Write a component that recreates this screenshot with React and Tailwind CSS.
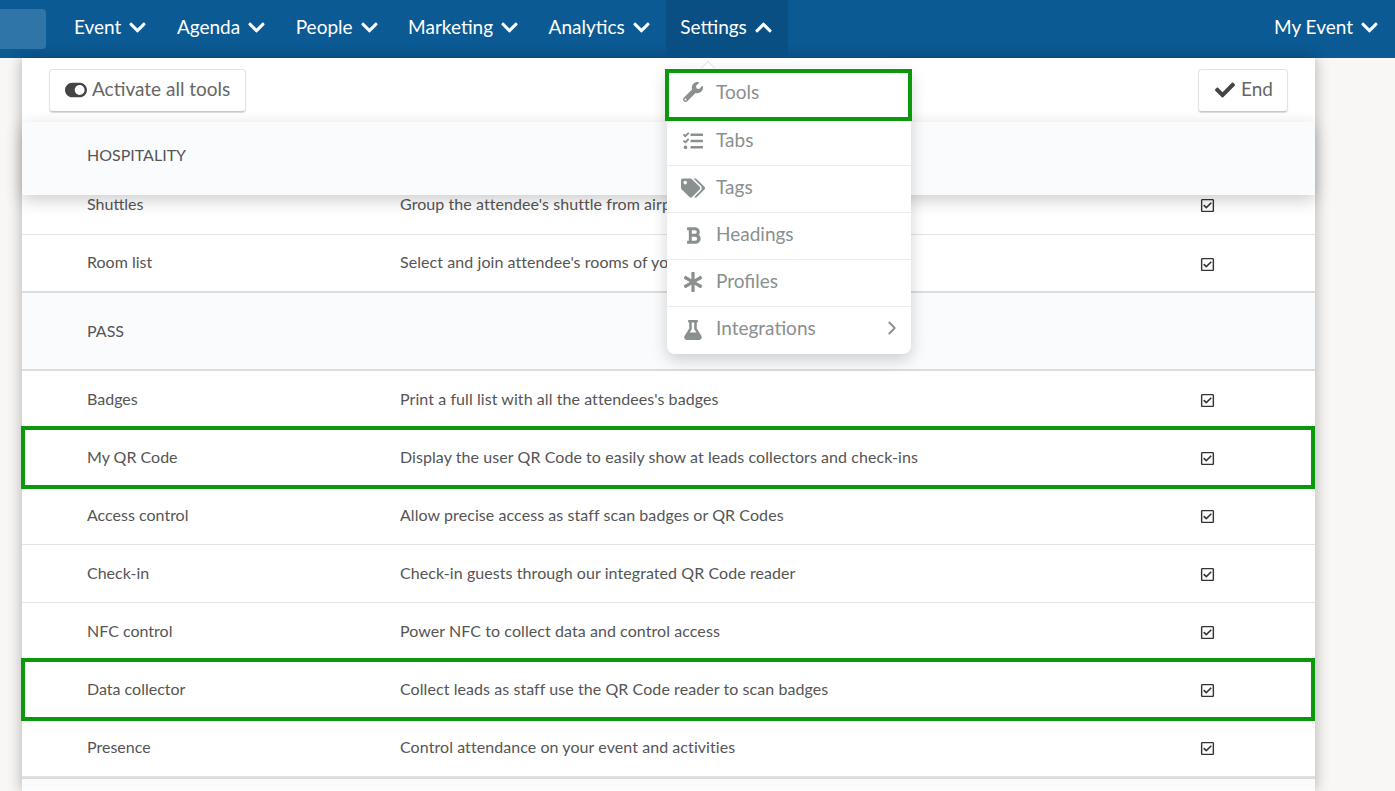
import {
  FaAsterisk,
  FaBold,
  FaCheck,
  FaChevronDown,
  FaChevronUp,
  FaFlask,
  FaRegCheckSquare,
  FaTags,
  FaTasks,
  FaToggleOn,
  FaWrench,
} from "react-icons/fa";
import { ChevronRight } from "lucide-react";

const navItems = ["Event", "Agenda", "People", "Marketing", "Analytics"];

const menuItems = [
  { label: "Tabs", Icon: FaTasks, size: "text-[20px]" },
  { label: "Tags", Icon: FaTags, size: "text-[24px]" },
  { label: "Headings", Icon: FaBold, size: "text-[19px]" },
  { label: "Profiles", Icon: FaAsterisk, size: "text-[20px]" },
  { label: "Integrations", Icon: FaFlask, size: "text-[20px]", more: true },
];

const passRows = [
  { name: "Badges", text: "Print a full list with all the attendees's badges" },
  {
    name: "My QR Code",
    text: "Display the user QR Code to easily show at leads collectors and check-ins",
    marked: true,
  },
  { name: "Access control", text: "Allow precise access as staff scan badges or QR Codes" },
  { name: "Check-in", text: "Check-in guests through our integrated QR Code reader" },
  { name: "NFC control", text: "Power NFC to collect data and control access" },
  {
    name: "Data collector",
    text: "Collect leads as staff use the QR Code reader to scan badges",
    marked: true,
  },
  { name: "Presence", text: "Control attendance on your event and activities" },
];

const Row = ({ name, text, marked, className = "h-[58px]" }) => (
  <div
    className={`relative flex items-center pl-[65px] pr-[100px] border-b border-[#e3e3e3] text-[16px] text-[#555] ${className}`}
  >
    <div className="w-[313px] shrink-0 pb-[2px]">{name}</div>
    <div className="flex-1 pb-[2px] tracking-[0.07px]">{text}</div>
    <FaRegCheckSquare className="text-[15px] text-[#333] mt-[2px]" />
    {marked && (
      <div className="absolute -left-px right-0 -top-[3px] -bottom-[3px] z-10 border-4 border-[#0a990a]"></div>
    )}
  </div>
);

const App = () => {
  return (
    <div className="relative h-[791px] overflow-hidden bg-[#f8f7f6] font-['Lato','Liberation_Sans',sans-serif]">
      <nav className="flex items-stretch h-[58px] bg-[#0b5a94] text-white text-[19px]">
        <div className="self-center w-[46px] h-10 mr-3.5 rounded-r bg-[#2f75a8]"></div>
        {navItems.map((item) => (
          <div key={item} className="flex items-center gap-[7px] pl-3.5 pr-[15.5px] pb-[3px]">
            <span>{item}</span>
            <FaChevronDown className="text-[19px]" />
          </div>
        ))}
        <div className="flex items-center gap-[7px] pl-3.5 pr-[15.5px] pb-[3px] bg-[#0a4f84]">
          <span>Settings</span>
          <FaChevronUp className="text-[19px]" />
        </div>
        <div className="flex items-center gap-[7px] ml-auto pr-4 pb-[3px]">
          <span>My Event</span>
          <FaChevronDown className="text-[19px]" />
        </div>
      </nav>

      <main className="mx-[22px] w-[1293px] h-[733px] bg-white shadow-[0_0_14px_rgba(0,0,0,0.3)]">
        <div className="flex items-center justify-between h-16 px-[27px] bg-white">
          <button className="flex items-center gap-[5px] h-[43px] px-[15px] pb-px rounded border border-[#e2e2e2] border-b-[#c8c8c8] shadow-[0_1px_1px_rgba(0,0,0,0.15)] text-[19px] text-[#666]">
            <FaToggleOn className="text-[22px] text-[#444] mt-px" />
            Activate all tools
          </button>
          <button className="flex items-center gap-1.5 h-[43px] pl-4 pr-3.5 pb-px rounded border border-[#e2e2e2] border-b-[#c8c8c8] shadow-[0_1px_1px_rgba(0,0,0,0.15)] text-[19px] text-[#666]">
            <FaCheck className="text-[20px] text-[#444] mt-px" />
            End
          </button>
        </div>

        <div className="relative z-10 flex items-center h-[73px] pl-[65px] pb-[7px] bg-[#fafbfd] text-[16px] text-[#555] shadow-[0_5px_16px_rgba(0,0,0,0.2)]">
          HOSPITALITY
        </div>
        <Row
          name="Shuttles"
          text="Group the attendee's shuttle from airport"
          className="h-10 pb-5"
        />
        <Row
          name="Room list"
          text="Select and join attendee's rooms of your event"
          className="h-[58px] border-b-2 border-b-[#dcdcdc]"
        />
        <div className="flex items-center h-[78px] pl-[65px] bg-[#fafbfd] border-b-2 border-[#dcdcdc] text-[16px] text-[#555]">
          PASS
        </div>
        {passRows.map((row) => (
          <Row key={row.name} {...row} />
        ))}
        <div className="h-[13px] bg-[#fafbfd] border-t-2 border-[#dcdcdc]"></div>
      </main>

      {/* settings menu */}
      <div className="absolute z-20 left-[667px] top-[68px] w-[244px] rounded-b-lg bg-white text-[19px] text-[#8a8f8f] shadow-[0_6px_16px_rgba(0,0,0,0.18)]">
        <div className="absolute left-[36px] -top-[5px] w-2.5 h-2.5 rotate-45 bg-white border-l border-t border-[#e3e3e3]"></div>
        <div className="relative flex items-center h-[51px] pl-[14px] pb-[3px]">
          <span className="flex justify-center w-6 mr-[11px]">
            <FaWrench className="text-[20px]" />
          </span>
          Tools
          <div className="absolute -left-[2px] -right-px top-px h-[52px] border-4 border-[#0a990a]"></div>
        </div>
        {menuItems.map(({ label, Icon, size, more }) => (
          <div
            key={label}
            className="flex items-center h-[47px] pl-[14px] pr-2 pb-[2px] border-b border-[#ececec] last:border-b-0"
          >
            <span className="flex justify-center w-6 mr-[11px]">
              <Icon className={size} />
            </span>
            <span className="flex-1 pb-[2px]">{label}</span>
            {more && <ChevronRight size={22} strokeWidth={2} className="-mt-1" />}
          </div>
        ))}
      </div>
    </div>
  );
};

export default App;
